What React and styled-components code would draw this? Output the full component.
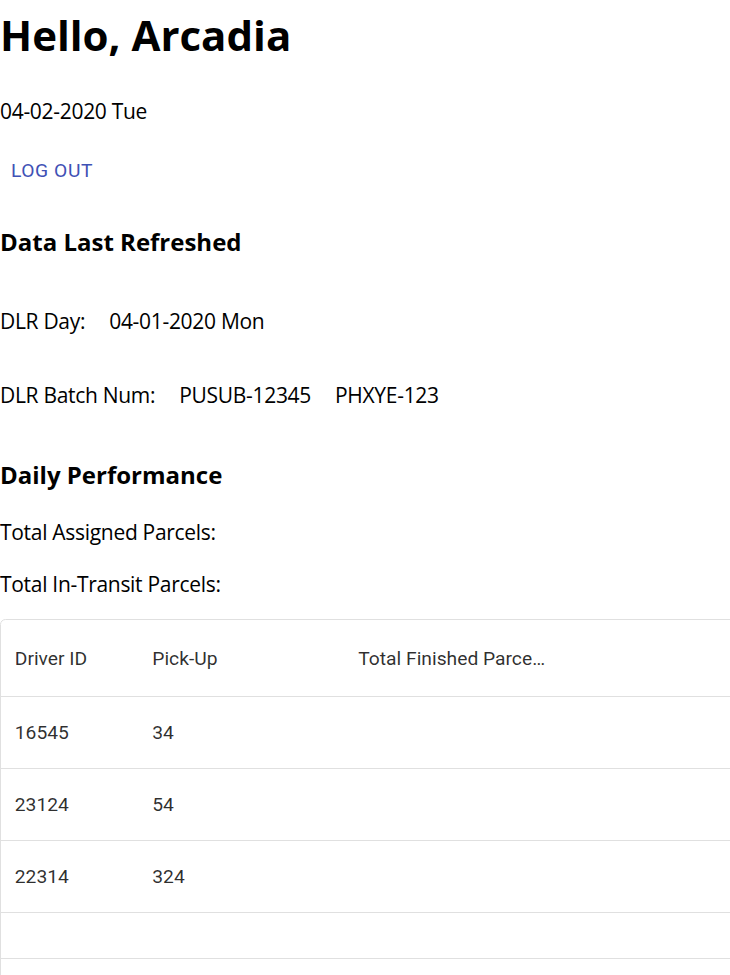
import React from 'react';
import styled, { createGlobalStyle } from 'styled-components';

const GlobalStyle = createGlobalStyle`
  body {
    margin: 0;
    background: #fff;
    overflow-x: hidden;
    font-family: "Open Sans", "Noto Sans", sans-serif;
    color: #000;
  }
`;

const Page = styled.div`
  display: flex;
  flex-direction: column;
  align-items: flex-start;
`;

const Title = styled.h1`
  margin: 0;
  font-size: 42px;
  font-weight: 700;
  line-height: 70px;
`;

const Line = styled.div`
  font-size: 21px;
  letter-spacing: -0.3px;
  line-height: 30px;
  margin-top: ${props => props.gap}px;
  display: flex;
  gap: 24px;
`;

const SectionTitle = styled.h3`
  margin: ${props => props.gap}px 0 0;
  font-size: 24px;
  font-weight: 700;
  line-height: 34px;
`;

const LogoutButton = styled.button`
  margin-top: 19px;
  height: 50px;
  padding: 0 11px;
  border: 0;
  background: transparent;
  border-radius: 5px;
  color: #3f51b5;
  font-family: Roboto, sans-serif;
  font-size: 19.25px;
  font-weight: 400;
  letter-spacing: 0.02857em;
  text-transform: uppercase;
  cursor: pointer;
`;

const Grid = styled.div`
  margin-top: 20px;
  width: 800px;
  border: 1px solid #e0e0e0;
  border-radius: 5.5px;
  font-family: Roboto, sans-serif;
  font-size: 19.25px;
  color: rgba(0, 0, 0, 0.82);
`;

const Row = styled.div`
  display: grid;
  grid-template-columns: 137.5px 206px 206px 1fr;
  height: ${props => props.h}px;
  border-bottom: 1px solid #e0e0e0;
`;

const Cell = styled.div`
  display: flex;
  align-items: center;
  padding: 0 13.75px;
  min-width: 0;
  white-space: nowrap;
`;

const Filler = styled.div`
  height: 45px;
  border-bottom: 1px solid #e0e0e0;
`;

const Footer = styled.div`
  height: 72px;
`;

// header title as shown truncated by the grid
const columns = ['Driver ID', 'Pick-Up', 'Total Finished Parce\u2026', ''];
const rows = [
  ['16545', '34'],
  ['23124', '54'],
  ['22314', '324'],
];

export default function App() {
  return (
    <Page>
      <GlobalStyle />
      <Title>Hello, Arcadia</Title>
      <Line gap={26}>04-02-2020 Tue</Line>
      <LogoutButton>Log out</LogoutButton>
      <SectionTitle gap={30}>Data Last Refreshed</SectionTitle>
      <Line gap={47}>
        <span>DLR Day:</span>
        <span>04-01-2020 Mon</span>
      </Line>
      <Line gap={44}>
        <span>DLR Batch Num:</span>
        <span>PUSUB-12345</span>
        <span>PHXYE-123</span>
      </Line>
      <SectionTitle gap={48}>Daily Performance</SectionTitle>
      <Line gap={25}>Total Assigned Parcels:</Line>
      <Line gap={22}>Total In-Transit Parcels:</Line>
      <Grid>
        <Row h={76}>
          {columns.map((c, i) => (
            <Cell key={i}>{c}</Cell>
          ))}
        </Row>
        {rows.map((r, i) => (
          <Row h={71} key={i}>
            <Cell>{r[0]}</Cell>
            <Cell>{r[1]}</Cell>
            <Cell />
            <Cell />
          </Row>
        ))}
        <Filler />
        <Footer />
      </Grid>
    </Page>
  );
}
